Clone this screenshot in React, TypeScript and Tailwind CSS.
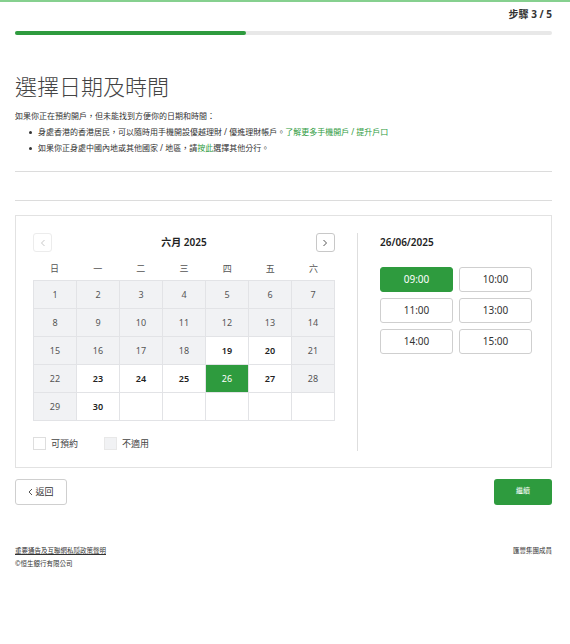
import React from "react";

const font = { fontFamily: '"Noto Sans", "Noto Sans CJK TC", sans-serif' };

type Cell = { d?: number; kind: "na" | "avail" | "sel" | "empty" };

const avail = new Set([19, 20, 23, 24, 25, 27, 30]);

function buildCells(): Cell[] {
  const cells: Cell[] = [];
  for (let d = 1; d <= 30; d++) {
    if (d === 26) cells.push({ d, kind: "sel" });
    else if (avail.has(d)) cells.push({ d, kind: "avail" });
    else cells.push({ d, kind: "na" });
  }
  while (cells.length < 35) cells.push({ kind: "empty" });
  return cells;
}

export default function App() {
  const cells = buildCells();
  const weekdays = ["日", "一", "二", "三", "四", "五", "六"];
  const times = ["09:00", "10:00", "11:00", "13:00", "14:00", "15:00"];
  return (
    <div className="min-h-[644px] w-[570px] bg-white text-[#333]" style={font}>
      <div className="h-[2px] w-full bg-[#86d08f]" />
      <div className="pl-[15px] pr-[18px]">
        <div className="flex justify-end pt-[5px]">
          <span className="text-[10px] font-bold text-[#333] leading-[14px]">步驟 3 / 5</span>
        </div>
        <div className="mt-[10px] h-[4px] w-full rounded-full bg-[#e8e8e8]">
          <div className="h-[4px] w-[43%] rounded-full bg-[#2e9b3e]" />
        </div>

        <h1 className="mt-[36px] text-[22px] font-light leading-[30px] text-[#444]">選擇日期及時間</h1>
        <p className="mt-[9px] text-[8px] leading-[12px] text-[#333]">
          如果你正在預約開戶，但未能找到方便你的日期和時間：
        </p>
        <ul className="mt-[4px] flex flex-col gap-[4px] text-[8px] leading-[12px]">
          <li className="flex items-start">
            <span className="ml-[14px] mr-[6px] mt-[4.5px] h-[3px] w-[3px] rounded-full bg-[#333]" />
            <span>
              身處香港的香港居民，可以隨時用手機開設優越理財 / 優進理財帳戶。
              <span className="text-[#2e9b3e]">了解更多手機開戶 / 提升戶口</span>
            </span>
          </li>
          <li className="flex items-start">
            <span className="ml-[14px] mr-[6px] mt-[4.5px] h-[3px] w-[3px] rounded-full bg-[#333]" />
            <span>
              如果你正身處中國內地或其他國家 / 地區，請<span className="text-[#2e9b3e]">按此</span>選擇其他分行。
            </span>
          </li>
        </ul>

        <div className="mt-[17px] h-px w-full bg-[#dcdcdc]" />
        <div className="mt-[28px] h-px w-full bg-[#dcdcdc]" />

        <div className="mt-[14px] flex border border-[#e2e2e2] bg-white pl-[17px] pr-[18px] pt-[17px] pb-[16px]">
          <div className="w-[302px]">
            <div className="flex h-[19px] items-center justify-between">
              <div className="flex h-[19px] w-[19px] items-center justify-center rounded-[3px] border border-[#ececec] text-[#c8c8c8]">
                <svg width="6" height="8" viewBox="0 0 6 8" fill="none"><path d="M4.5 1L1.5 4L4.5 7" stroke="currentColor" strokeWidth="1" /></svg>
              </div>
              <span className="text-[10px] font-semibold text-[#222]">六月 2025</span>
              <div className="flex h-[19px] w-[19px] items-center justify-center rounded-[3px] border border-[#c8c8c8] text-[#555]">
                <svg width="6" height="8" viewBox="0 0 6 8" fill="none"><path d="M1.5 1L4.5 4L1.5 7" stroke="currentColor" strokeWidth="1" /></svg>
              </div>
            </div>
            <div className="mt-[7px] grid h-[20px] grid-cols-7 items-center text-center text-[9px] text-[#555]">
              {weekdays.map((w) => (
                <span key={w}>{w}</span>
              ))}
            </div>
            <div className="mt-[1px] grid grid-cols-7 border-l border-t border-[#e2e3e6]">
              {cells.map((c, i) => {
                const base = "flex h-[28px] items-center justify-center border-r border-b border-[#e2e3e6] text-[9px]";
                let cls = "";
                if (c.kind === "na") cls = "bg-[#f1f2f4] text-[#555]";
                else if (c.kind === "avail") cls = "bg-white font-semibold text-[#222]";
                else if (c.kind === "sel") cls = "bg-[#2e9b3e] text-white";
                else cls = "bg-white";
                return (
                  <div key={i} className={`${base} ${cls}`}>
                    {c.d ?? ""}
                  </div>
                );
              })}
            </div>
            <div className="mt-[16px] flex items-center text-[9px] text-[#444]">
              <span className="h-[13px] w-[13px] border border-[#dedede] bg-white" />
              <span className="ml-[5px]">可預約</span>
              <span className="ml-[26px] h-[13px] w-[13px] border border-[#e8e8e8] bg-[#f1f2f4]" />
              <span className="ml-[5px]">不適用</span>
            </div>
          </div>
          <div className="mx-[22px] w-px bg-[#dedede]" />
          <div className="w-[152px]">
            <div className="flex h-[19px] items-center text-[10px] font-semibold text-[#222]">26/06/2025</div>
            <div className="mt-[15px] grid grid-cols-2 gap-x-[6px] gap-y-[6px]">
              {times.map((t, i) => (
                <div
                  key={t}
                  className={
                    i === 0
                      ? "flex h-[25px] items-center justify-center rounded-[3px] border border-[#2e9b3e] bg-[#2e9b3e] text-[10px] text-white"
                      : "flex h-[25px] items-center justify-center rounded-[3px] border border-[#cfcfcf] bg-white text-[10px] text-[#333]"
                  }
                >
                  {t}
                </div>
              ))}
            </div>
          </div>
        </div>

        <div className="mt-[11px] flex items-center justify-between">
          <div className="flex h-[26px] w-[52px] items-center justify-center rounded-[3px] border border-[#cfcfcf] bg-white text-[9px] text-[#333]">
            <svg width="5" height="8" viewBox="0 0 5 8" fill="none" className="mr-[2px]"><path d="M4 1L1 4L4 7" stroke="#555" strokeWidth="1" /></svg>
            返回
          </div>
          <div className="flex h-[26px] w-[58px] items-center justify-center rounded-[3px] bg-[#2e9b3e] text-[7px] text-white">
            繼續
          </div>
        </div>

        <div className="mt-[41px] flex justify-between text-[6.5px] text-[#333]">
          <div className="flex flex-col gap-[4px]">
            <span className="underline">重要通告及互聯網私隱政策聲明</span>
            <span>©恒生銀行有限公司</span>
          </div>
          <span>匯豐集團成員</span>
        </div>
      </div>
    </div>
  );
}
